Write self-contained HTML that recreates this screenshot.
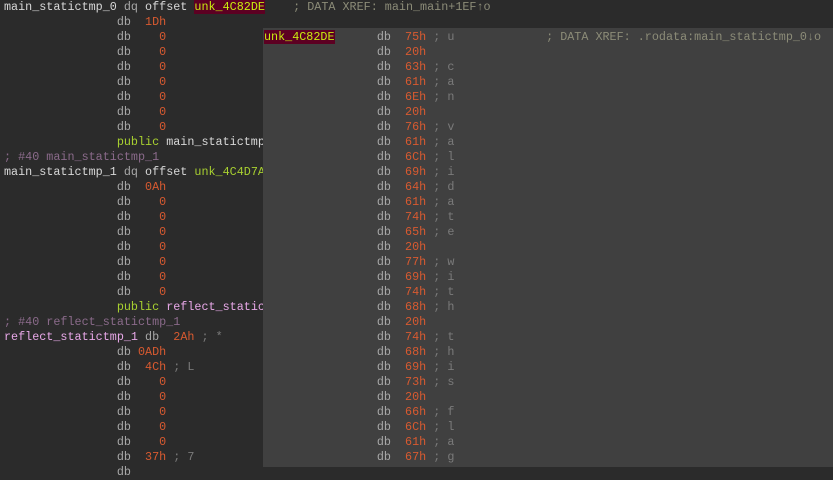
<!DOCTYPE html>
<html><head><meta charset="utf-8"><style>
html,body{margin:0;padding:0;width:833px;height:467px;overflow:hidden;background:#2b2b2b;}
.l{position:absolute;left:4px;top:0;font-family:"Liberation Mono",monospace;font-size:11.75px;line-height:15px;white-space:pre;color:#d8d8d8;}
.p{position:absolute;left:263px;top:28px;width:570px;height:439px;background:#404040;overflow:hidden;}
.p .l{left:1px;top:2px;}
.d{color:#a8a8a8}.n{color:#d85a30}.c{color:#7a7a7a}.x{color:#8c8c78}.g{color:#a8d030}.pk{color:#e8a8e8}.pu{color:#8a6a8a}.y{color:#c8ec10;background:#5c0022}.w{color:#d8d8d8}
</style></head><body>
<div class="l">main_statictmp_0 <span class="d">dq</span> offset <span class="y">unk_4C82DE</span>    <span class="x">; DATA XREF: main_main+1EF↑o</span>
                <span class="d">db</span>  <span class="n">1Dh</span>
                <span class="d">db</span>    <span class="n">0</span>
                <span class="d">db</span>    <span class="n">0</span>
                <span class="d">db</span>    <span class="n">0</span>
                <span class="d">db</span>    <span class="n">0</span>
                <span class="d">db</span>    <span class="n">0</span>
                <span class="d">db</span>    <span class="n">0</span>
                <span class="d">db</span>    <span class="n">0</span>
                <span class="g">public</span> main_statictmp_1
<span class="pu">; #40 main_statictmp_1</span>
main_statictmp_1 <span class="d">dq</span> offset <span class="g">unk_4C4D7A</span>
                <span class="d">db</span>  <span class="n">0Ah</span>
                <span class="d">db</span>    <span class="n">0</span>
                <span class="d">db</span>    <span class="n">0</span>
                <span class="d">db</span>    <span class="n">0</span>
                <span class="d">db</span>    <span class="n">0</span>
                <span class="d">db</span>    <span class="n">0</span>
                <span class="d">db</span>    <span class="n">0</span>
                <span class="d">db</span>    <span class="n">0</span>
                <span class="g">public</span> <span class="pk">reflect_statictmp_1</span>
<span class="pu">; #40 reflect_statictmp_1</span>
<span class="pk">reflect_statictmp_1</span> <span class="d">db</span>  <span class="n">2Ah</span> <span class="c">; *</span>
                <span class="d">db</span> <span class="n">0ADh</span>
                <span class="d">db</span>  <span class="n">4Ch</span> <span class="c">; L</span>
                <span class="d">db</span>    <span class="n">0</span>
                <span class="d">db</span>    <span class="n">0</span>
                <span class="d">db</span>    <span class="n">0</span>
                <span class="d">db</span>    <span class="n">0</span>
                <span class="d">db</span>    <span class="n">0</span>
                <span class="d">db</span>  <span class="n">37h</span> <span class="c">; 7</span>
                <span class="d">db</span>
</div>
<div class="p"><div class="l"><span class="y">unk_4C82DE</span>      <span class="d">db</span>  <span class="n">75h</span> <span class="c">; u</span>             <span class="x">; DATA XREF: .rodata:main_statictmp_0↓o</span>
                <span class="d">db</span>  <span class="n">20h</span>
                <span class="d">db</span>  <span class="n">63h</span> <span class="c">; c</span>
                <span class="d">db</span>  <span class="n">61h</span> <span class="c">; a</span>
                <span class="d">db</span>  <span class="n">6Eh</span> <span class="c">; n</span>
                <span class="d">db</span>  <span class="n">20h</span>
                <span class="d">db</span>  <span class="n">76h</span> <span class="c">; v</span>
                <span class="d">db</span>  <span class="n">61h</span> <span class="c">; a</span>
                <span class="d">db</span>  <span class="n">6Ch</span> <span class="c">; l</span>
                <span class="d">db</span>  <span class="n">69h</span> <span class="c">; i</span>
                <span class="d">db</span>  <span class="n">64h</span> <span class="c">; d</span>
                <span class="d">db</span>  <span class="n">61h</span> <span class="c">; a</span>
                <span class="d">db</span>  <span class="n">74h</span> <span class="c">; t</span>
                <span class="d">db</span>  <span class="n">65h</span> <span class="c">; e</span>
                <span class="d">db</span>  <span class="n">20h</span>
                <span class="d">db</span>  <span class="n">77h</span> <span class="c">; w</span>
                <span class="d">db</span>  <span class="n">69h</span> <span class="c">; i</span>
                <span class="d">db</span>  <span class="n">74h</span> <span class="c">; t</span>
                <span class="d">db</span>  <span class="n">68h</span> <span class="c">; h</span>
                <span class="d">db</span>  <span class="n">20h</span>
                <span class="d">db</span>  <span class="n">74h</span> <span class="c">; t</span>
                <span class="d">db</span>  <span class="n">68h</span> <span class="c">; h</span>
                <span class="d">db</span>  <span class="n">69h</span> <span class="c">; i</span>
                <span class="d">db</span>  <span class="n">73h</span> <span class="c">; s</span>
                <span class="d">db</span>  <span class="n">20h</span>
                <span class="d">db</span>  <span class="n">66h</span> <span class="c">; f</span>
                <span class="d">db</span>  <span class="n">6Ch</span> <span class="c">; l</span>
                <span class="d">db</span>  <span class="n">61h</span> <span class="c">; a</span>
                <span class="d">db</span>  <span class="n">67h</span> <span class="c">; g</span>
</div></div>
</body></html>
